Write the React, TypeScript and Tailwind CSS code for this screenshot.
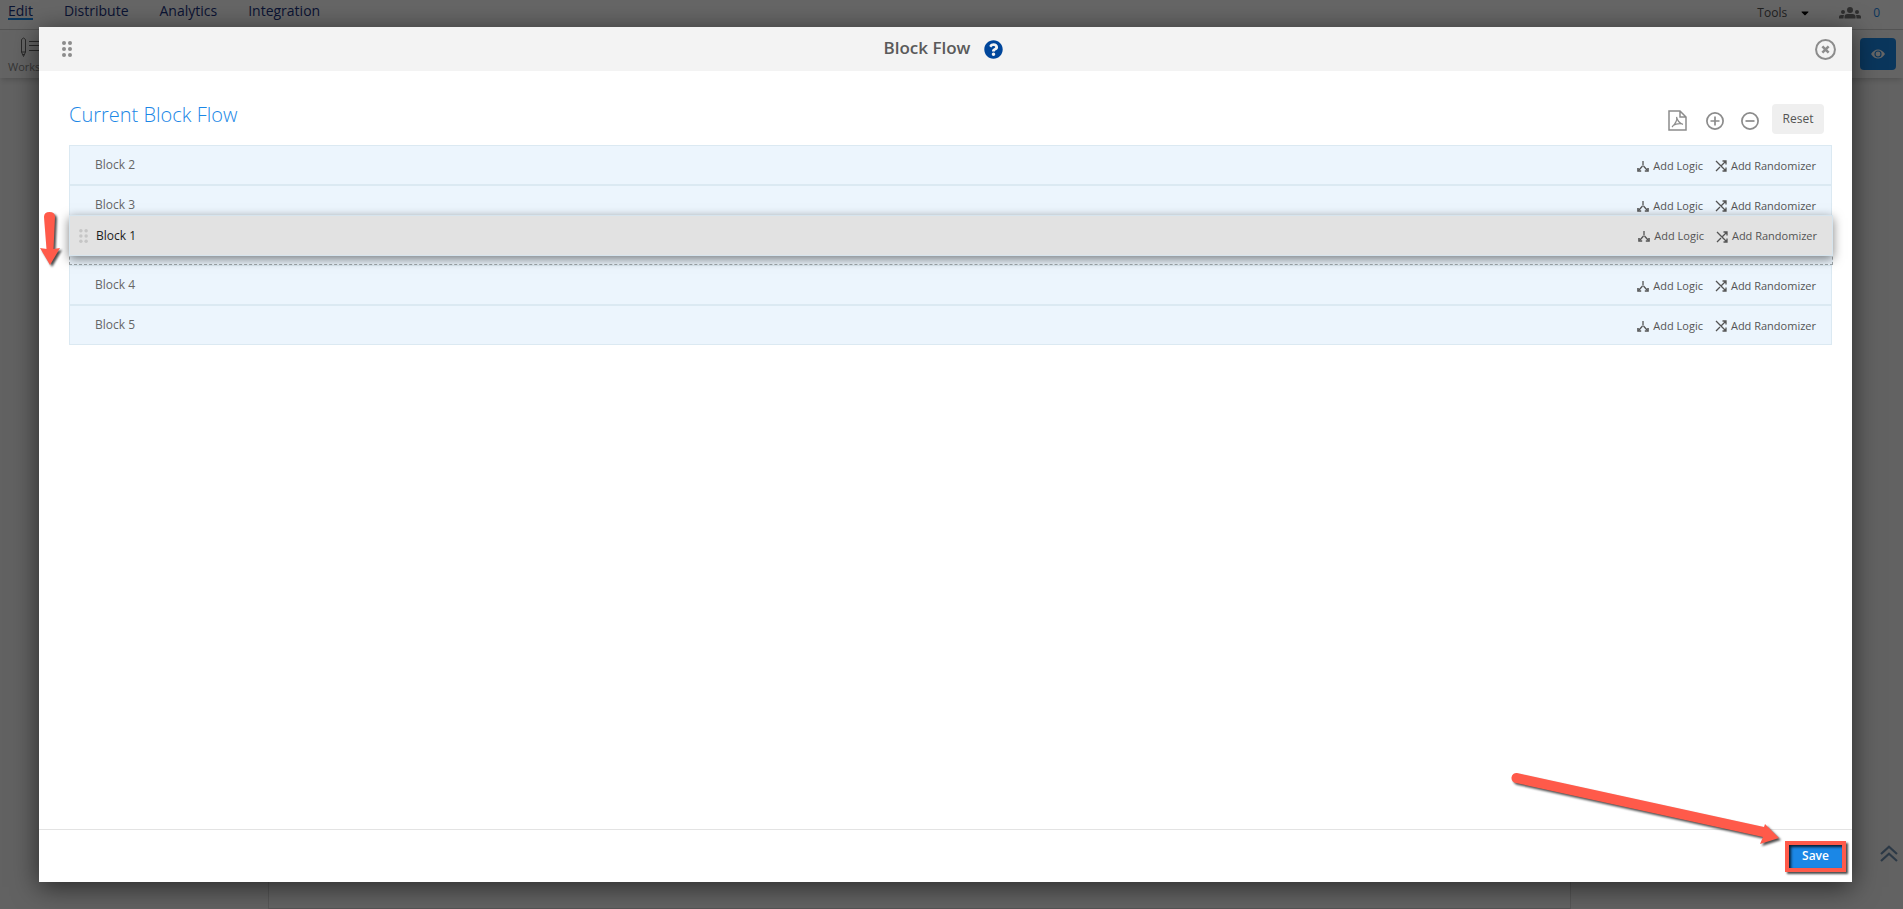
import type { ReactNode } from 'react';
import { FaCaretDown, FaQuestionCircle } from 'react-icons/fa';

const navLinks = ['Distribute', 'Analytics', 'Integration'];

function DragDots({ className }: { className: string }) {
  return (
    <svg viewBox="0 0 10 16" className={className} fill="currentColor" aria-hidden="true">
      {[2, 8, 14].map((y) => (
        <g key={y}>
          <circle cx="2" cy={y} r="2" />
          <circle cx="8" cy={y} r="2" />
        </g>
      ))}
    </svg>
  );
}

function LogicIcon() {
  return (
    <svg viewBox="0 0 12 11" className="w-3 h-[11px] shrink-0" fill="none" stroke="currentColor" strokeWidth="1.3" aria-hidden="true">
      <path d="M6 0v4.5M5.5 5L2 9M6.5 5L10 9" />
      <path d="M1 7V10H4.2M11 7V10H7.8" strokeWidth="1.6" />
    </svg>
  );
}

function ShuffleIcon() {
  return (
    <svg viewBox="0 0 12 12" className="w-3 h-3 shrink-0" fill="none" stroke="currentColor" strokeWidth="1.3" aria-hidden="true">
      <path d="M1 1L11 11M1 11L5 7M6.5 5.5L11 1M7.5 1H11V4.5M7.5 11H11V7.5" />
    </svg>
  );
}

function CircleIcon({ children, className }: { children: ReactNode; className: string }) {
  return (
    <svg viewBox="0 0 20 20" className={className} fill="none" stroke="currentColor" strokeWidth="1.9" aria-hidden="true">
      <circle cx="10" cy="10" r="9" />
      {children}
    </svg>
  );
}

function BlockActions() {
  return (
    <div className="flex items-center gap-3 pt-[2px] text-[11px] text-[#545454]">
      <button type="button" className="flex items-center gap-1">
        <LogicIcon />
        Add Logic
      </button>
      <button type="button" className="flex items-center gap-1">
        <ShuffleIcon />
        Add Randomizer
      </button>
    </div>
  );
}

function BlockRow({ name }: { name: string }) {
  return (
    <li className="h-10 flex items-center justify-between pl-[25px] pr-[15px] bg-[#ecf5fd] border border-[#dbe9f2]">
      <span className="text-xs text-[#666]">{name}</span>
      <BlockActions />
    </li>
  );
}

export default function App() {
  return (
    <div className="relative min-h-screen flex flex-col overflow-hidden bg-[#f5f5f5] font-['Open_Sans','Noto_Sans',sans-serif]">
      {/* Page behind the dialog */}
      <header className="h-[30px] flex items-start justify-between bg-white border-b border-[#d0d0d0] pl-2 pr-[23px]">
        <nav className="flex gap-[31px] text-sm leading-[22px] text-[#1b3380]">
          <a href="#edit" className="h-5 border-b-2 border-[#1b87e6]">Edit</a>
          {navLinks.map((label) => (
            <a key={label} href={`#${label.toLowerCase()}`}>{label}</a>
          ))}
        </nav>
        <div className="flex items-center text-xs leading-[26px] text-[#545454]">
          <button type="button" className="flex items-center gap-3">
            Tools
            <FaCaretDown className="text-black" />
          </button>
          <svg viewBox="0 0 22 12" className="ml-7 w-[22px] h-3" fill="#777" aria-hidden="true">
            <circle cx="11" cy="3" r="3" />
            <path d="M5.5 11.5V9.5Q5.5 7 8.5 7H13.5Q16.5 7 16.5 9.5V11.5Z" />
            <circle cx="4" cy="5" r="2" />
            <circle cx="18" cy="5" r="2" />
            <path d="M0 11.5V9.5Q0 8 2 8H5Q4.5 9 4.5 11.5ZM22 11.5V9.5Q22 8 20 8H17Q17.5 9 17.5 11.5Z" />
          </svg>
          <a href="#users" className="ml-3 text-[#1b87e6]">0</a>
        </div>
      </header>
      <div className="h-12 flex items-center justify-between bg-[#fafafa] shadow-md pl-2 pr-[7px]">
        <div className="pt-1 text-[11px] leading-4 text-[#888]">
          <svg viewBox="0 0 36 22" className="ml-3 w-9 h-[22px]" fill="none" stroke="#666" aria-hidden="true">
            <path d="M1.5 15V2.5Q3.5 -.5 5.5 2.5V15L3.5 19.5ZM1.5 15H5.5M2.5 17.5H4.5M9 4.5H36M9 8.5H36M9 13.5H36" />
          </svg>
          Workspace
        </div>
        <button type="button" aria-label="Preview" className="w-9 h-8 flex items-center justify-center rounded-sm bg-[#1b87e6] text-white">
          <svg viewBox="0 0 14 10" className="w-[14px] h-[10px]" aria-hidden="true">
            <path d="M0 5Q3 0.5 7 0.5T14 5Q11 9.5 7 9.5T0 5Z" fill="currentColor" />
            <circle cx="7" cy="5" r="3" fill="none" stroke="#1b87e6" strokeWidth="1.2" />
          </svg>
        </button>
      </div>
      <div className="flex-1 ml-[268px] mr-[332px] border-x border-b border-[#d8d8d8] bg-[#f9f9f9]" />
      <a href="#top" aria-label="Back to top" className="absolute right-[5px] bottom-[47px] text-[#6f8fb0]">
        <svg viewBox="0 0 18 17" className="w-[18px] h-[17px]" fill="none" stroke="currentColor" strokeWidth="2.2" aria-hidden="true">
          <path d="M1 9L9 1.7L17 9M1 16L9 8.7L17 16" />
        </svg>
      </a>

      {/* Dialog */}
      <div className="absolute inset-0 flex bg-black/60 py-[27px] pl-[39px] pr-[51px]">
        <section role="dialog" aria-labelledby="dialog-title" className="relative flex-1 flex flex-col bg-white shadow-[0_5px_25px_rgba(0,0,0,0.6)]">
          <header className="h-11 flex items-center justify-between bg-[#f3f3f3] pl-[23px] pr-4 text-[#8c8c8c]">
            <DragDots className="w-[10px] h-4" />
            <div className="flex items-center gap-[14px]">
              <h1 id="dialog-title" className="text-[17px] leading-6 pb-[2px] font-semibold text-[#5a5a5a]">Block Flow</h1>
              <button type="button" aria-label="Help" className="text-[#00469b]"><FaQuestionCircle className="w-[19px] h-[19px]" /></button>
            </div>
            <button type="button" aria-label="Close">
              <CircleIcon className="w-[21px] h-[21px]">
                <path d="M7 7l6 6M13 7l-6 6" strokeWidth="2.4" />
              </CircleIcon>
            </button>
          </header>

          <div className="flex-1 pl-[30px] pr-5 pt-8">
            <div className="h-[42px] flex items-start justify-between">
              <h2 className="text-xl leading-6 font-light text-[#1b87e6]">Current Block Flow</h2>
              <div className="flex items-end gap-[17px] pt-px pr-2 text-[#8c8c8c]">
                <button type="button" aria-label="Export as PDF" className="pb-[3px]">
                  <svg viewBox="0 0 19 21" className="w-[19px] h-[21px]" fill="none" stroke="currentColor" strokeWidth="1.5" aria-hidden="true">
                    <path d="M1 1H12L18 7V20H1ZM12 1V7H18" />
                    <path d="M8.5 7Q10 13 15 14.5M8.5 7Q10 11 4 17M5 15.5Q9 13 15 14" strokeWidth="1.2" />
                  </svg>
                </button>
                <button type="button" aria-label="Expand all" className="ml-[2px] pb-1">
                  <CircleIcon className="w-[18px] h-[18px]"><path d="M10 5v10M5 10h10" /></CircleIcon>
                </button>
                <button type="button" aria-label="Collapse all" className="pb-1">
                  <CircleIcon className="w-[18px] h-[18px]"><path d="M5 10h10" /></CircleIcon>
                </button>
                <button type="button" className="-ml-1 w-[52px] h-[30px] rounded-sm bg-[#efefef] text-xs text-[#545454]">Reset</button>
              </div>
            </div>

            <div className="relative">
              <ul>
                <BlockRow name="Block 2" />
                <BlockRow name="Block 3" />
                <li className="h-10 -mr-px border border-dashed border-[#a0a8ac] bg-[#ecf5fd]" />
                <BlockRow name="Block 4" />
                <BlockRow name="Block 5" />
              </ul>
              {/* Block being dragged */}
              <div className="absolute top-[70px] left-0 -right-px h-[41px] flex items-center justify-between pl-[9px] pr-[15px] bg-[#e2e2e2] border border-[#d6e4ed] shadow-[0_3px_10px_rgba(0,0,0,0.5)]">
                <div className="flex items-center gap-2">
                  <DragDots className="w-[9px] h-[14px] text-[#c6c6c6]" />
                  <span className="text-xs text-[#1c1c1c]">Block 1</span>
                </div>
                <BlockActions />
              </div>
              <svg viewBox="0 0 24 56" className="absolute top-[66px] -left-[30px] w-6 h-14 drop-shadow-[2px_2px_1px_rgba(0,0,0,0.7)]" fill="#ff5a4a" aria-hidden="true">
                <path d="M5 6Q5 1 10.5 1Q16 1 16 6L14.5 38L21 37L11 54L1 37L7.5 38Z" />
              </svg>
            </div>
          </div>

          <footer className="relative h-[53px] flex items-center justify-end border-t border-[#e3e3e3] pr-[6px]">
            <button type="button" className="w-[61px] h-[31px] border-4 border-[#ff5a4a] bg-[#1b87e6] text-xs font-semibold text-white shadow-[2px_2px_2px_rgba(0,0,0,0.7),inset_2px_2px_3px_rgba(0,0,0,0.8)]">
              Save
            </button>
            <svg viewBox="0 0 270 76" className="absolute right-[72px] bottom-[34px] w-[270px] h-[76px] drop-shadow-[2px_2px_1px_rgba(0,0,0,0.7)]" fill="#ff5a4a" aria-hidden="true">
              <path d="M7 1L254 55L255 52L269 66L250 72L253 65L6 11A5 5 0 0 1 7 1Z" />
            </svg>
          </footer>
        </section>
      </div>
    </div>
  );
}
